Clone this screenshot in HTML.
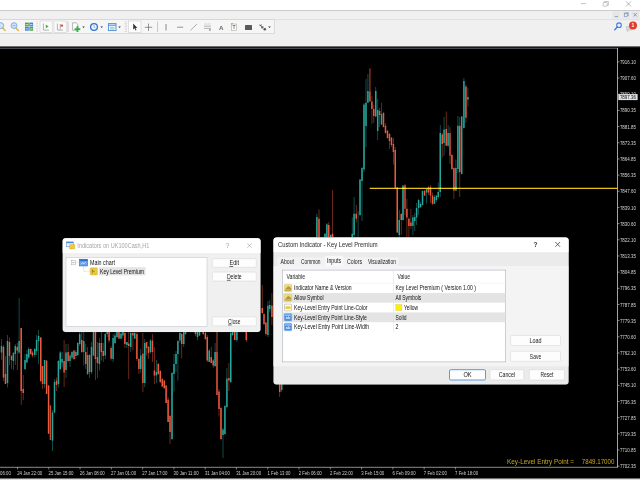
<!DOCTYPE html>
<html><head><meta charset="utf-8"><title>Key Level Premium</title>
<style>
html,body{margin:0;padding:0;background:#000;overflow:hidden}
svg{display:block;filter:blur(0.45px)}
</style></head><body>
<svg width="640" height="480" viewBox="0 0 640 480" style="font-family:'Liberation Sans', sans-serif">
<rect x="0" y="0" width="640" height="10.2" fill="#ffffff" />
<rect x="0" y="10.2" width="640" height="36.5" fill="#f0f0f0" />
<line x1="0" y1="19.6" x2="640" y2="19.6" stroke="#dadada" stroke-width="0.7" />
<rect x="-2" y="19.6" width="276.3" height="13.9" fill="#f6f6f6" stroke="#cfcfcf" stroke-width="0.7" />
<rect x="0" y="46.6" width="640" height="1.6" fill="#161616" />
<rect x="0" y="48" width="640" height="430.2" fill="#000000" />
<rect x="0" y="478.5" width="640" height="1.5" fill="#dcdcdc" />
<line x1="581" y1="3.6" x2="586" y2="3.6" stroke="#9a9a9a" stroke-width="0.6" />
<rect x="603.2" y="2.4" width="4" height="3.8" fill="none" stroke="#9a9a9a" stroke-width="0.55" rx="0.6" />
<path d="M604.4 2.4V1.5h4v3.8h-1.2" fill="none" stroke="#9a9a9a" stroke-width="0.55"/>
<path d="M626 1.4l5 5M631 1.4l-5 5" stroke="#8a8a8a" stroke-width="0.6"/>
<rect x="612.5" y="11.2" width="8" height="7.4" fill="#e6e6e6" />
<rect x="622" y="11.2" width="8" height="7.4" fill="#e6e6e6" />
<rect x="631.2" y="11.2" width="8" height="7.4" fill="#e6e6e6" />
<line x1="614.8" y1="16.6" x2="618" y2="16.6" stroke="#6f8fc4" stroke-width="0.8" />
<rect x="624.3" y="13.6" width="3" height="2.8" fill="none" stroke="#6f8fc4" stroke-width="0.6" />
<path d="M625.3 13.6v-0.9h3v2.8h-1" fill="none" stroke="#6f8fc4" stroke-width="0.6"/>
<path d="M633.6 13l3.2 3.4M636.8 13l-3.2 3.4" stroke="#6f8fc4" stroke-width="0.8"/>
<circle cx="619" cy="25.2" r="2.3" fill="#eaf2ff" stroke="#3f7fe0" stroke-width="1.1"/>
<path d="M617.3 27l-2.6 2.7" stroke="#3f7fe0" stroke-width="1.3" stroke-linecap="round"/>
<path d="M626.5 26.5h5.5v3.6h-3l-1.6 1.4v-1.4h-0.9z" fill="#d8d8d8" stroke="#a8a8a8" stroke-width="0.4"/>
<circle cx="633" cy="25.4" r="4" fill="#e23b2c"/>
<text x="633" y="27.27" font-size="5" fill="#ffffff" text-anchor="middle" font-weight="bold" >1</text>
<circle cx="0.8" cy="25.6" r="2.9" fill="#d3e4fb" stroke="#74a6e8" stroke-width="0.9"/>
<path d="M2.8 28l2.4 2.6" stroke="#d9b23c" stroke-width="1.4" stroke-linecap="round"/>
<circle cx="14" cy="25.6" r="2.9" fill="#d3e4fb" stroke="#74a6e8" stroke-width="0.9"/>
<line x1="12.6" y1="25.6" x2="15.4" y2="25.6" stroke="#74a6e8" stroke-width="0.8" />
<path d="M16 28l2.4 2.6" stroke="#d9b23c" stroke-width="1.4" stroke-linecap="round"/>
<rect x="25" y="22.6" width="3.8" height="3.8" fill="#4fa04a" />
<rect x="29.3" y="22.6" width="3.8" height="3.8" fill="#3f83d6" />
<rect x="25" y="26.9" width="3.8" height="3.8" fill="#3f83d6" />
<rect x="29.3" y="26.9" width="3.8" height="3.8" fill="#4fa04a" />
<line x1="25.6" y1="24.6" x2="28.2" y2="24.6" stroke="#fff" stroke-width="0.7" />
<line x1="29.9" y1="24.6" x2="32.5" y2="24.6" stroke="#fff" stroke-width="0.7" />
<line x1="25.6" y1="28.9" x2="28.2" y2="28.9" stroke="#fff" stroke-width="0.7" />
<line x1="29.9" y1="28.9" x2="32.5" y2="28.9" stroke="#fff" stroke-width="0.7" />
<line x1="37" y1="21.5" x2="37" y2="32" stroke="#b5b5b5" stroke-width="0.7" stroke-dasharray="0.8 0.8"/>
<rect x="40" y="21" width="12.2" height="11.4" fill="#fbfbfb" stroke="#cfcfcf" stroke-width="0.6" />
<rect x="54" y="21" width="12.2" height="11.4" fill="#fbfbfb" stroke="#cfcfcf" stroke-width="0.6" />
<path d="M43.4 23.5v6.6h5.6" fill="none" stroke="#8a8a8a" stroke-width="0.65"/>
<path d="M45.8 24.6l2.8 1.8l-2.8 1.8z" fill="#3fae49"/>
<path d="M57.4 23.5v6.6h5.6" fill="none" stroke="#8a8a8a" stroke-width="0.65"/>
<line x1="60.2" y1="24" x2="60.2" y2="29.6" stroke="#8a8a8a" stroke-width="0.65" />
<path d="M60.6 24.6h2.4v2h-2.4z" fill="#e0483a"/>
<line x1="68" y1="21.5" x2="68" y2="32" stroke="#b5b5b5" stroke-width="0.7" />
<path d="M72.6 22.8h3.6l1.6 1.6v5.8h-5.2z" fill="#fdfdfd" stroke="#8a8a8a" stroke-width="0.6"/>
<path d="M76.5 26.3h1.9v1.9h1.9v1.9h-1.9v1.9h-1.9v-1.9h-1.9v-1.9h1.9z" fill="#2fb344"/>
<path d="M82.3 26.4h2.6l-1.3 1.5z" fill="#333"/>
<circle cx="94" cy="27" r="3.4" fill="#eaf3ff" stroke="#2f74d0" stroke-width="1.3"/>
<path d="M94 25v2.1l1.4 0.8" fill="none" stroke="#7a8aa0" stroke-width="0.6"/>
<path d="M100.4 26.4h2.6l-1.3 1.5z" fill="#333"/>
<rect x="108.4" y="23.6" width="7.6" height="7" fill="#eef5ff" stroke="#4a8ee0" stroke-width="0.9" />
<line x1="108.4" y1="25.2" x2="116" y2="25.2" stroke="#4a8ee0" stroke-width="1.0" />
<line x1="110" y1="27.4" x2="114.4" y2="27.4" stroke="#e08a3a" stroke-width="0.6" />
<line x1="110" y1="29" x2="114.4" y2="29" stroke="#5aa85a" stroke-width="0.6" />
<path d="M118.3 26.4h2.6l-1.3 1.5z" fill="#333"/>
<line x1="125.2" y1="21.5" x2="125.2" y2="32" stroke="#b5b5b5" stroke-width="0.6" stroke-dasharray="0.8 0.8"/>
<line x1="126.4" y1="21.5" x2="126.4" y2="32" stroke="#b5b5b5" stroke-width="0.6" stroke-dasharray="0.8 0.8"/>
<rect x="128.6" y="21" width="12.4" height="11.4" fill="#fdfdfd" stroke="#cfcfcf" stroke-width="0.6" />
<path d="M133.2 23.6v6l1.4-1.3l1 2.2l0.9-0.4l-1-2.1h1.9z" fill="#333"/>
<line x1="148.5" y1="23.6" x2="148.5" y2="31" stroke="#6a6a6a" stroke-width="0.7" />
<line x1="144.8" y1="27.3" x2="152.2" y2="27.3" stroke="#6a6a6a" stroke-width="0.7" />
<line x1="157.5" y1="21.5" x2="157.5" y2="32" stroke="#b5b5b5" stroke-width="0.7" />
<line x1="166" y1="24" x2="166" y2="30.4" stroke="#7a7a7a" stroke-width="0.9" />
<line x1="177" y1="27.2" x2="183.2" y2="27.2" stroke="#7a7a7a" stroke-width="0.8" />
<line x1="190.4" y1="30.4" x2="197" y2="24" stroke="#8a8a8a" stroke-width="0.7" />
<line x1="204" y1="24" x2="211" y2="24" stroke="#999" stroke-width="0.5" stroke-dasharray="0.8 0.5"/>
<line x1="204" y1="26.2" x2="211" y2="26.2" stroke="#888" stroke-width="0.6" />
<line x1="204" y1="28.4" x2="211" y2="28.4" stroke="#888" stroke-width="0.6" />
<path d="M208.8 29.6h2.2l-1.1 1.5z" fill="#555"/>
<text x="221.3" y="29.8" font-size="6.2" fill="#666" text-anchor="middle" font-weight="bold" >A</text>
<rect x="231.6" y="24" width="5" height="6.6" fill="#fbfbf3" stroke="#999" stroke-width="0.5" />
<text x="234.1" y="29.27" font-size="5" fill="#777" text-anchor="middle" font-weight="bold" >T</text>
<line x1="231" y1="23.6" x2="233" y2="23.6" stroke="#888" stroke-width="0.6" />
<rect x="245" y="25" width="7" height="5" fill="#5a5a5a" rx="0.6" />
<path d="M259.6 24.6l2.2 2.2M259.4 25.6h1.8v-1.4" fill="none" stroke="#555" stroke-width="0.7"/>
<rect x="261.2" y="26.2" width="2.2" height="2.2" fill="#666" />
<circle cx="264.8" cy="29.2" r="1.3" fill="#555"/>
<path d="M268.2 26.4h2.6l-1.3 1.5z" fill="#333"/>
<defs><filter id="bl" x="-5%" y="-5%" width="110%" height="110%"><feGaussianBlur stdDeviation="0.3"/></filter></defs>
<g id="candles" filter="url(#bl)">
<rect x="1.10" y="339.0" width="0.8" height="21.00" fill="#25a79c" opacity="0.55"/>
<rect x="0.75" y="346.0" width="1.5" height="6.50" fill="#25a79c"/>
<rect x="3.10" y="345.0" width="0.8" height="36.00" fill="#ec5a3e" opacity="0.55"/>
<rect x="2.75" y="347.0" width="1.5" height="30.50" fill="#ec5a3e"/>
<rect x="5.10" y="356.0" width="0.8" height="28.00" fill="#ec5a3e" opacity="0.55"/>
<rect x="4.75" y="374.0" width="1.5" height="10.00" fill="#ec5a3e"/>
<rect x="7.10" y="335.0" width="0.8" height="52.50" fill="#25a79c" opacity="0.55"/>
<rect x="6.75" y="341.0" width="1.5" height="42.00" fill="#25a79c"/>
<rect x="9.10" y="337.5" width="0.8" height="27.50" fill="#ec5a3e" opacity="0.55"/>
<rect x="8.75" y="342.0" width="1.5" height="14.00" fill="#ec5a3e"/>
<rect x="11.10" y="355.0" width="0.8" height="14.00" fill="#ec5a3e" opacity="0.55"/>
<rect x="10.75" y="356.0" width="1.5" height="4.00" fill="#ec5a3e"/>
<rect x="13.00" y="352.0" width="0.8" height="18.00" fill="#25a79c" opacity="0.55"/>
<rect x="12.65" y="353.0" width="1.5" height="8.00" fill="#25a79c"/>
<rect x="14.90" y="344.0" width="0.8" height="21.00" fill="#25a79c" opacity="0.55"/>
<rect x="14.55" y="346.0" width="1.5" height="8.00" fill="#25a79c"/>
<rect x="16.90" y="343.0" width="0.8" height="27.00" fill="#ec5a3e" opacity="0.55"/>
<rect x="16.55" y="347.0" width="1.5" height="3.60" fill="#ec5a3e"/>
<rect x="18.70" y="298.0" width="0.8" height="56.00" fill="#25a79c" opacity="0.55"/>
<rect x="18.35" y="341.0" width="1.5" height="11.50" fill="#25a79c"/>
<rect x="20.80" y="328.0" width="0.8" height="77.00" fill="#ec5a3e" opacity="0.55"/>
<rect x="20.45" y="328.0" width="1.5" height="63.00" fill="#ec5a3e"/>
<rect x="22.80" y="375.0" width="0.8" height="25.00" fill="#ec5a3e" opacity="0.55"/>
<rect x="22.45" y="389.0" width="1.5" height="4.00" fill="#ec5a3e"/>
<rect x="24.60" y="354.0" width="0.8" height="16.00" fill="#25a79c" opacity="0.55"/>
<rect x="24.25" y="360.0" width="1.5" height="9.00" fill="#25a79c"/>
<rect x="26.50" y="350.0" width="0.8" height="13.00" fill="#25a79c" opacity="0.55"/>
<rect x="26.15" y="354.0" width="1.5" height="8.50" fill="#25a79c"/>
<rect x="28.35" y="347.0" width="0.8" height="12.00" fill="#25a79c" opacity="0.55"/>
<rect x="28.00" y="349.0" width="1.5" height="8.50" fill="#25a79c"/>
<rect x="30.35" y="348.5" width="0.8" height="6.50" fill="#ec5a3e" opacity="0.55"/>
<rect x="30.00" y="349.0" width="1.5" height="5.00" fill="#ec5a3e"/>
<rect x="32.10" y="351.0" width="0.8" height="6.50" fill="#ec5a3e" opacity="0.55"/>
<rect x="31.75" y="352.5" width="1.5" height="3.10" fill="#ec5a3e"/>
<rect x="34.35" y="348.0" width="0.8" height="9.50" fill="#25a79c" opacity="0.55"/>
<rect x="34.00" y="349.0" width="1.5" height="6.00" fill="#25a79c"/>
<rect x="36.20" y="335.0" width="0.8" height="20.00" fill="#25a79c" opacity="0.55"/>
<rect x="35.85" y="340.0" width="1.5" height="11.00" fill="#25a79c"/>
<rect x="38.20" y="330.0" width="0.8" height="34.00" fill="#25a79c" opacity="0.55"/>
<rect x="37.85" y="336.0" width="1.5" height="5.00" fill="#25a79c"/>
<rect x="40.35" y="337.0" width="0.8" height="45.00" fill="#ec5a3e" opacity="0.55"/>
<rect x="40.00" y="337.5" width="1.5" height="43.50" fill="#ec5a3e"/>
<rect x="42.20" y="366.0" width="0.8" height="23.00" fill="#ec5a3e" opacity="0.55"/>
<rect x="41.85" y="366.0" width="1.5" height="18.00" fill="#ec5a3e"/>
<rect x="44.20" y="360.0" width="0.8" height="28.00" fill="#25a79c" opacity="0.55"/>
<rect x="43.85" y="360.0" width="1.5" height="24.00" fill="#25a79c"/>
<rect x="46.20" y="360.0" width="0.8" height="34.00" fill="#ec5a3e" opacity="0.55"/>
<rect x="45.85" y="360.6" width="1.5" height="33.40" fill="#ec5a3e"/>
<rect x="48.20" y="385.0" width="0.8" height="49.00" fill="#ec5a3e" opacity="0.55"/>
<rect x="47.85" y="385.6" width="1.5" height="48.15" fill="#ec5a3e"/>
<rect x="50.00" y="405.0" width="0.8" height="35.00" fill="#ec5a3e" opacity="0.55"/>
<rect x="49.65" y="405.6" width="1.5" height="34.40" fill="#ec5a3e" opacity="0.7"/>
<rect x="52.10" y="410.0" width="0.8" height="41.00" fill="#25a79c" opacity="0.55"/>
<rect x="51.75" y="412.5" width="1.5" height="28.10" fill="#25a79c"/>
<rect x="54.10" y="379.0" width="0.8" height="34.00" fill="#25a79c" opacity="0.55"/>
<rect x="53.75" y="382.0" width="1.5" height="30.50" fill="#25a79c"/>
<rect x="56.10" y="377.5" width="0.8" height="13.50" fill="#ec5a3e" opacity="0.55"/>
<rect x="55.75" y="380.6" width="1.5" height="4.40" fill="#ec5a3e"/>
<rect x="58.00" y="360.0" width="0.8" height="27.50" fill="#25a79c" opacity="0.55"/>
<rect x="57.65" y="361.0" width="1.5" height="23.00" fill="#25a79c"/>
<rect x="59.85" y="351.0" width="0.8" height="19.00" fill="#25a79c" opacity="0.55"/>
<rect x="59.50" y="352.5" width="1.5" height="16.50" fill="#25a79c"/>
<rect x="61.70" y="352.0" width="0.8" height="15.50" fill="#25a79c" opacity="0.55"/>
<rect x="61.35" y="359.0" width="1.5" height="3.50" fill="#25a79c"/>
<rect x="63.70" y="340.0" width="0.8" height="47.00" fill="#ec5a3e" opacity="0.55"/>
<rect x="63.35" y="361.0" width="1.5" height="11.50" fill="#ec5a3e"/>
<rect x="65.60" y="344.0" width="0.8" height="34.00" fill="#25a79c" opacity="0.55"/>
<rect x="65.25" y="352.5" width="1.5" height="17.50" fill="#25a79c"/>
<rect x="67.70" y="344.0" width="0.8" height="18.50" fill="#ec5a3e" opacity="0.55"/>
<rect x="67.35" y="352.0" width="1.5" height="9.00" fill="#ec5a3e"/>
<rect x="69.60" y="354.0" width="0.8" height="13.00" fill="#25a79c" opacity="0.55"/>
<rect x="69.25" y="355.6" width="1.5" height="5.40" fill="#25a79c"/>
<rect x="71.60" y="351.0" width="0.8" height="8.00" fill="#25a79c" opacity="0.55"/>
<rect x="71.25" y="352.0" width="1.5" height="5.50" fill="#25a79c"/>
<rect x="73.60" y="350.0" width="0.8" height="10.00" fill="#ec5a3e" opacity="0.55"/>
<rect x="73.25" y="350.6" width="1.5" height="8.40" fill="#ec5a3e"/>
<rect x="75.50" y="350.0" width="0.8" height="9.00" fill="#25a79c" opacity="0.55"/>
<rect x="75.15" y="352.0" width="1.5" height="4.00" fill="#25a79c"/>
<rect x="77.35" y="342.0" width="0.8" height="14.00" fill="#25a79c" opacity="0.55"/>
<rect x="77.00" y="343.0" width="1.5" height="12.00" fill="#25a79c"/>
<rect x="79.30" y="332.0" width="0.8" height="14.00" fill="#25a79c" opacity="0.55"/>
<rect x="78.95" y="334.0" width="1.5" height="10.00" fill="#25a79c"/>
<rect x="81.35" y="332.0" width="0.8" height="21.00" fill="#ec5a3e" opacity="0.55"/>
<rect x="81.00" y="340.0" width="1.5" height="12.00" fill="#ec5a3e"/>
<rect x="83.35" y="332.0" width="0.8" height="33.50" fill="#25a79c" opacity="0.55"/>
<rect x="83.00" y="341.0" width="1.5" height="11.00" fill="#25a79c"/>
<rect x="85.35" y="344.0" width="0.8" height="25.00" fill="#ec5a3e" opacity="0.55"/>
<rect x="85.00" y="352.0" width="1.5" height="12.00" fill="#ec5a3e"/>
<rect x="87.20" y="347.0" width="0.8" height="28.00" fill="#25a79c" opacity="0.55"/>
<rect x="86.85" y="355.0" width="1.5" height="19.00" fill="#25a79c"/>
<rect x="89.10" y="354.0" width="0.8" height="24.00" fill="#ec5a3e" opacity="0.55"/>
<rect x="88.75" y="355.0" width="1.5" height="17.00" fill="#ec5a3e"/>
<rect x="91.10" y="342.0" width="0.8" height="32.00" fill="#25a79c" opacity="0.55"/>
<rect x="90.75" y="347.0" width="1.5" height="25.00" fill="#25a79c"/>
<rect x="93.10" y="332.0" width="0.8" height="24.00" fill="#25a79c" opacity="0.55"/>
<rect x="92.75" y="332.0" width="1.5" height="23.50" fill="#25a79c"/>
<rect x="95.00" y="332.0" width="0.8" height="48.00" fill="#ec5a3e" opacity="0.55"/>
<rect x="94.65" y="332.0" width="1.5" height="27.00" fill="#ec5a3e"/>
<rect x="97.00" y="342.0" width="0.8" height="36.00" fill="#ec5a3e" opacity="0.55"/>
<rect x="96.65" y="357.0" width="1.5" height="6.00" fill="#ec5a3e"/>
<rect x="99.00" y="338.0" width="0.8" height="32.50" fill="#25a79c" opacity="0.55"/>
<rect x="98.65" y="343.0" width="1.5" height="21.00" fill="#25a79c"/>
<rect x="101.00" y="332.0" width="0.8" height="28.50" fill="#ec5a3e" opacity="0.55"/>
<rect x="100.65" y="343.0" width="1.5" height="9.00" fill="#ec5a3e"/>
<rect x="102.85" y="343.0" width="0.8" height="19.00" fill="#ec5a3e" opacity="0.55"/>
<rect x="102.50" y="351.0" width="1.5" height="5.00" fill="#ec5a3e"/>
<rect x="104.85" y="333.0" width="0.8" height="26.00" fill="#25a79c" opacity="0.55"/>
<rect x="104.50" y="334.0" width="1.5" height="21.50" fill="#25a79c"/>
<rect x="106.85" y="332.0" width="0.8" height="5.00" fill="#25a79c" opacity="0.55"/>
<rect x="106.50" y="332.0" width="1.5" height="2.00" fill="#25a79c"/>
<rect x="108.70" y="332.0" width="0.8" height="11.00" fill="#ec5a3e" opacity="0.55"/>
<rect x="108.35" y="332.0" width="1.5" height="8.50" fill="#ec5a3e"/>
<rect x="110.70" y="346.0" width="0.8" height="14.50" fill="#ec5a3e" opacity="0.55"/>
<rect x="110.35" y="348.0" width="1.5" height="10.60" fill="#ec5a3e"/>
<rect x="112.70" y="334.0" width="0.8" height="28.00" fill="#25a79c" opacity="0.55"/>
<rect x="112.35" y="338.0" width="1.5" height="21.00" fill="#25a79c"/>
<rect x="114.60" y="333.0" width="0.8" height="11.00" fill="#25a79c" opacity="0.55"/>
<rect x="114.25" y="335.5" width="1.5" height="7.50" fill="#25a79c"/>
<rect x="116.60" y="332.0" width="0.8" height="6.00" fill="#25a79c" opacity="0.55"/>
<rect x="116.25" y="332.0" width="1.5" height="5.00" fill="#25a79c"/>
<rect x="118.60" y="332.0" width="0.8" height="7.00" fill="#ec5a3e" opacity="0.55"/>
<rect x="118.25" y="332.0" width="1.5" height="6.60" fill="#ec5a3e"/>
<rect x="120.60" y="332.0" width="0.8" height="7.00" fill="#25a79c" opacity="0.55"/>
<rect x="120.25" y="333.6" width="1.5" height="5.00" fill="#25a79c"/>
<rect x="122.50" y="332.0" width="0.8" height="6.00" fill="#25a79c" opacity="0.55"/>
<rect x="122.15" y="332.0" width="1.5" height="3.50" fill="#25a79c"/>
<rect x="124.50" y="332.0" width="0.8" height="16.00" fill="#ec5a3e" opacity="0.55"/>
<rect x="124.15" y="333.0" width="1.5" height="11.00" fill="#ec5a3e"/>
<rect x="126.50" y="342.0" width="0.8" height="6.00" fill="#25a79c" opacity="0.55"/>
<rect x="126.15" y="342.0" width="1.5" height="3.00" fill="#25a79c"/>
<rect x="128.35" y="332.0" width="0.8" height="47.00" fill="#ec5a3e" opacity="0.55"/>
<rect x="128.00" y="343.6" width="1.5" height="2.40" fill="#ec5a3e"/>
<rect x="130.35" y="332.0" width="0.8" height="20.00" fill="#25a79c" opacity="0.55"/>
<rect x="130.00" y="333.0" width="1.5" height="14.00" fill="#25a79c"/>
<rect x="132.50" y="332.0" width="0.8" height="18.50" fill="#ec5a3e" opacity="0.55"/>
<rect x="132.15" y="333.0" width="1.5" height="2.50" fill="#ec5a3e"/>
<rect x="134.35" y="332.0" width="0.8" height="7.00" fill="#25a79c" opacity="0.55"/>
<rect x="134.00" y="333.0" width="1.5" height="5.60" fill="#25a79c"/>
<rect x="136.50" y="332.0" width="0.8" height="29.00" fill="#ec5a3e" opacity="0.55"/>
<rect x="136.15" y="334.0" width="1.5" height="25.00" fill="#ec5a3e"/>
<rect x="138.50" y="358.0" width="0.8" height="16.00" fill="#ec5a3e" opacity="0.55"/>
<rect x="138.15" y="359.0" width="1.5" height="10.00" fill="#ec5a3e"/>
<rect x="140.35" y="349.0" width="0.8" height="24.00" fill="#25a79c" opacity="0.55"/>
<rect x="140.00" y="355.5" width="1.5" height="13.50" fill="#25a79c"/>
<rect x="142.50" y="333.0" width="0.8" height="59.00" fill="#ec5a3e" opacity="0.55"/>
<rect x="142.15" y="353.6" width="1.5" height="29.40" fill="#ec5a3e"/>
<rect x="144.35" y="339.0" width="0.8" height="48.00" fill="#25a79c" opacity="0.55"/>
<rect x="144.00" y="343.0" width="1.5" height="40.00" fill="#25a79c"/>
<rect x="146.20" y="342.0" width="0.8" height="13.50" fill="#ec5a3e" opacity="0.55"/>
<rect x="145.85" y="342.0" width="1.5" height="6.00" fill="#ec5a3e"/>
<rect x="148.10" y="346.0" width="0.8" height="13.00" fill="#ec5a3e" opacity="0.55"/>
<rect x="147.75" y="347.0" width="1.5" height="6.00" fill="#ec5a3e"/>
<rect x="150.10" y="339.0" width="0.8" height="15.00" fill="#25a79c" opacity="0.55"/>
<rect x="149.75" y="340.5" width="1.5" height="11.50" fill="#25a79c"/>
<rect x="152.10" y="334.0" width="0.8" height="28.00" fill="#ec5a3e" opacity="0.55"/>
<rect x="151.75" y="340.5" width="1.5" height="11.50" fill="#ec5a3e"/>
<rect x="154.00" y="347.0" width="0.8" height="37.00" fill="#ec5a3e" opacity="0.55"/>
<rect x="153.65" y="370.5" width="1.5" height="5.00" fill="#ec5a3e"/>
<rect x="156.00" y="360.0" width="0.8" height="23.00" fill="#25a79c" opacity="0.55"/>
<rect x="155.65" y="372.0" width="1.5" height="3.50" fill="#25a79c"/>
<rect x="157.85" y="363.0" width="0.8" height="12.00" fill="#ec5a3e" opacity="0.55"/>
<rect x="157.50" y="364.0" width="1.5" height="10.00" fill="#ec5a3e"/>
<rect x="159.85" y="370.0" width="0.8" height="13.00" fill="#ec5a3e" opacity="0.55"/>
<rect x="159.50" y="371.0" width="1.5" height="11.00" fill="#ec5a3e"/>
<rect x="161.85" y="378.0" width="0.8" height="9.00" fill="#ec5a3e" opacity="0.55"/>
<rect x="161.50" y="379.0" width="1.5" height="7.50" fill="#ec5a3e"/>
<rect x="163.85" y="380.0" width="0.8" height="9.00" fill="#ec5a3e" opacity="0.55"/>
<rect x="163.50" y="380.5" width="1.5" height="7.50" fill="#ec5a3e"/>
<rect x="165.70" y="385.0" width="0.8" height="18.00" fill="#ec5a3e" opacity="0.55"/>
<rect x="165.35" y="385.5" width="1.5" height="17.50" fill="#ec5a3e"/>
<rect x="167.70" y="397.0" width="0.8" height="25.00" fill="#ec5a3e" opacity="0.55"/>
<rect x="167.35" y="399.6" width="1.5" height="22.40" fill="#ec5a3e"/>
<rect x="169.60" y="415.0" width="0.8" height="29.00" fill="#ec5a3e" opacity="0.55"/>
<rect x="169.25" y="416.0" width="1.5" height="16.00" fill="#ec5a3e"/>
<rect x="171.60" y="372.0" width="0.8" height="68.00" fill="#25a79c" opacity="0.55"/>
<rect x="171.25" y="373.0" width="1.5" height="66.00" fill="#25a79c"/>
<rect x="173.60" y="354.0" width="0.8" height="37.50" fill="#25a79c" opacity="0.55"/>
<rect x="173.25" y="364.0" width="1.5" height="10.00" fill="#25a79c"/>
<rect x="175.60" y="351.0" width="0.8" height="21.00" fill="#25a79c" opacity="0.55"/>
<rect x="175.25" y="354.0" width="1.5" height="10.00" fill="#25a79c"/>
<rect x="177.50" y="340.0" width="0.8" height="40.50" fill="#25a79c" opacity="0.55"/>
<rect x="177.15" y="341.0" width="1.5" height="13.00" fill="#25a79c"/>
<rect x="179.50" y="332.0" width="0.8" height="11.00" fill="#25a79c" opacity="0.55"/>
<rect x="179.15" y="333.0" width="1.5" height="7.50" fill="#25a79c"/>
<rect x="181.35" y="333.0" width="0.8" height="25.60" fill="#ec5a3e" opacity="0.55"/>
<rect x="181.00" y="334.0" width="1.5" height="10.00" fill="#ec5a3e"/>
<rect x="183.35" y="332.0" width="0.8" height="15.00" fill="#25a79c" opacity="0.55"/>
<rect x="183.00" y="332.0" width="1.5" height="12.00" fill="#25a79c"/>
<rect x="185.10" y="332.0" width="0.8" height="3.00" fill="#25a79c" opacity="0.55"/>
<rect x="184.75" y="332.0" width="1.5" height="2.00" fill="#25a79c"/>
<rect x="195.10" y="332.0" width="0.8" height="4.00" fill="#ec5a3e" opacity="0.55"/>
<rect x="194.75" y="332.0" width="1.5" height="2.00" fill="#ec5a3e"/>
<rect x="197.10" y="332.0" width="0.8" height="8.00" fill="#25a79c" opacity="0.55"/>
<rect x="196.75" y="332.0" width="1.5" height="5.00" fill="#25a79c"/>
<rect x="199.10" y="332.0" width="0.8" height="4.00" fill="#25a79c" opacity="0.55"/>
<rect x="198.75" y="332.0" width="1.5" height="3.50" fill="#25a79c"/>
<rect x="202.85" y="332.0" width="0.8" height="3.00" fill="#ec5a3e" opacity="0.55"/>
<rect x="202.50" y="332.0" width="1.5" height="2.00" fill="#ec5a3e"/>
<rect x="205.00" y="332.0" width="0.8" height="8.00" fill="#ec5a3e" opacity="0.55"/>
<rect x="204.65" y="333.0" width="1.5" height="6.00" fill="#ec5a3e"/>
<rect x="206.85" y="335.0" width="0.8" height="27.00" fill="#ec5a3e" opacity="0.55"/>
<rect x="206.50" y="337.0" width="1.5" height="23.50" fill="#ec5a3e"/>
<rect x="208.85" y="349.0" width="0.8" height="13.00" fill="#25a79c" opacity="0.55"/>
<rect x="208.50" y="350.5" width="1.5" height="11.50" fill="#25a79c"/>
<rect x="210.85" y="347.0" width="0.8" height="16.00" fill="#ec5a3e" opacity="0.55"/>
<rect x="210.50" y="357.0" width="1.5" height="6.00" fill="#ec5a3e"/>
<rect x="212.85" y="359.0" width="0.8" height="9.00" fill="#ec5a3e" opacity="0.55"/>
<rect x="212.50" y="360.5" width="1.5" height="5.00" fill="#ec5a3e"/>
<rect x="214.70" y="343.0" width="0.8" height="24.00" fill="#25a79c" opacity="0.55"/>
<rect x="214.35" y="352.0" width="1.5" height="14.00" fill="#25a79c"/>
<rect x="216.25" y="332.0" width="1.5" height="20.00" fill="#ec5a3e" opacity="0.55"/>
<rect x="216.25" y="352.0" width="1.5" height="43.00" fill="#ec5a3e"/>
<rect x="218.60" y="389.0" width="0.8" height="27.50" fill="#ec5a3e" opacity="0.55"/>
<rect x="218.25" y="391.5" width="1.5" height="17.50" fill="#ec5a3e"/>
<rect x="220.60" y="407.0" width="0.8" height="33.00" fill="#ec5a3e" opacity="0.55"/>
<rect x="220.25" y="408.0" width="1.5" height="31.00" fill="#ec5a3e"/>
<rect x="222.60" y="428.0" width="0.8" height="30.00" fill="#25a79c" opacity="0.55"/>
<rect x="222.25" y="429.6" width="1.5" height="5.40" fill="#25a79c"/>
<rect x="224.50" y="405.0" width="0.8" height="30.00" fill="#25a79c" opacity="0.55"/>
<rect x="224.15" y="406.0" width="1.5" height="28.00" fill="#25a79c"/>
<rect x="226.50" y="368.0" width="0.8" height="40.00" fill="#25a79c" opacity="0.55"/>
<rect x="226.15" y="378.6" width="1.5" height="28.40" fill="#25a79c"/>
<rect x="228.50" y="363.0" width="0.8" height="28.00" fill="#ec5a3e" opacity="0.55"/>
<rect x="228.15" y="378.0" width="1.5" height="2.50" fill="#ec5a3e"/>
<rect x="230.35" y="332.0" width="0.8" height="51.00" fill="#25a79c" opacity="0.55"/>
<rect x="230.00" y="333.0" width="1.5" height="49.00" fill="#25a79c"/>
<rect x="232.20" y="332.0" width="0.8" height="4.00" fill="#25a79c" opacity="0.55"/>
<rect x="231.85" y="332.0" width="1.5" height="3.00" fill="#25a79c"/>
<rect x="234.35" y="332.0" width="0.8" height="8.00" fill="#ec5a3e" opacity="0.55"/>
<rect x="234.00" y="332.0" width="1.5" height="8.00" fill="#ec5a3e"/>
<rect x="236.50" y="332.0" width="0.8" height="10.00" fill="#25a79c" opacity="0.55"/>
<rect x="236.15" y="332.0" width="1.5" height="8.00" fill="#25a79c"/>
<rect x="245.90" y="332.0" width="0.8" height="10.00" fill="#ec5a3e" opacity="0.55"/>
<rect x="245.55" y="332.0" width="1.5" height="8.00" fill="#ec5a3e"/>
<rect x="261.85" y="285.0" width="0.8" height="29.00" fill="#ec5a3e" opacity="0.55"/>
<rect x="261.50" y="308.0" width="1.5" height="5.00" fill="#ec5a3e"/>
<rect x="263.60" y="313.0" width="0.8" height="12.00" fill="#ec5a3e" opacity="0.55"/>
<rect x="263.25" y="314.0" width="1.5" height="10.00" fill="#ec5a3e"/>
<rect x="265.50" y="322.0" width="0.8" height="13.60" fill="#ec5a3e" opacity="0.55"/>
<rect x="265.15" y="322.5" width="1.5" height="11.50" fill="#ec5a3e"/>
<rect x="267.50" y="301.0" width="0.8" height="36.00" fill="#25a79c" opacity="0.55"/>
<rect x="267.15" y="305.6" width="1.5" height="29.40" fill="#25a79c"/>
<rect x="269.35" y="300.0" width="0.8" height="12.50" fill="#25a79c" opacity="0.55"/>
<rect x="269.00" y="305.0" width="1.5" height="4.00" fill="#25a79c"/>
<rect x="271.50" y="293.0" width="0.8" height="32.00" fill="#ec5a3e" opacity="0.55"/>
<rect x="271.15" y="305.6" width="1.5" height="11.40" fill="#ec5a3e"/>
<rect x="279.30" y="384.0" width="0.8" height="13.00" fill="#ec5a3e" opacity="0.55"/>
<rect x="278.95" y="384.0" width="1.5" height="8.00" fill="#ec5a3e"/>
<rect x="281.30" y="384.0" width="0.8" height="8.00" fill="#25a79c" opacity="0.55"/>
<rect x="280.95" y="384.0" width="1.5" height="6.00" fill="#25a79c"/>
<rect x="316.50" y="213.75" width="0.8" height="23.25" fill="#25a79c" opacity="0.55"/>
<rect x="316.15" y="217.0" width="1.5" height="20.00" fill="#25a79c"/>
<rect x="318.60" y="209.4" width="0.8" height="27.60" fill="#ec5a3e" opacity="0.55"/>
<rect x="318.25" y="218.75" width="1.5" height="18.25" fill="#ec5a3e"/>
<rect x="324.60" y="233.0" width="0.8" height="4.00" fill="#25a79c" opacity="0.55"/>
<rect x="324.25" y="233.75" width="1.5" height="3.25" fill="#25a79c"/>
<rect x="326.50" y="223.0" width="0.8" height="14.00" fill="#25a79c" opacity="0.55"/>
<rect x="326.15" y="224.4" width="1.5" height="12.60" fill="#25a79c"/>
<rect x="328.35" y="222.0" width="0.8" height="15.00" fill="#ec5a3e" opacity="0.55"/>
<rect x="328.00" y="225.0" width="1.5" height="12.00" fill="#ec5a3e"/>
<rect x="330.35" y="234.0" width="0.8" height="3.00" fill="#25a79c" opacity="0.55"/>
<rect x="330.00" y="235.0" width="1.5" height="2.00" fill="#25a79c"/>
<rect x="332.20" y="190.0" width="0.8" height="47.00" fill="#ec5a3e" opacity="0.55"/>
<rect x="331.85" y="233.75" width="1.5" height="3.25" fill="#ec5a3e"/>
<rect x="351.85" y="217.5" width="0.8" height="19.50" fill="#25a79c" opacity="0.55"/>
<rect x="351.50" y="233.75" width="1.5" height="3.25" fill="#25a79c"/>
<rect x="353.70" y="197.0" width="0.8" height="40.00" fill="#25a79c" opacity="0.55"/>
<rect x="353.35" y="213.75" width="1.5" height="21.25" fill="#25a79c"/>
<rect x="355.85" y="205.0" width="0.8" height="17.50" fill="#ec5a3e" opacity="0.55"/>
<rect x="355.50" y="213.75" width="1.5" height="5.00" fill="#ec5a3e"/>
<rect x="357.70" y="211.0" width="0.8" height="26.00" fill="#25a79c" opacity="0.55"/>
<rect x="359.60" y="179.0" width="0.8" height="37.00" fill="#25a79c" opacity="0.55"/>
<rect x="359.25" y="179.5" width="1.5" height="35.50" fill="#25a79c"/>
<rect x="361.60" y="167.0" width="0.8" height="54.00" fill="#25a79c" opacity="0.55"/>
<rect x="361.25" y="168.0" width="1.5" height="13.00" fill="#25a79c"/>
<rect x="363.60" y="103.0" width="0.8" height="69.00" fill="#25a79c" opacity="0.55"/>
<rect x="363.25" y="104.6" width="1.5" height="64.90" fill="#25a79c"/>
<rect x="365.60" y="79.0" width="0.8" height="68.00" fill="#25a79c" opacity="0.55"/>
<rect x="365.25" y="102.75" width="1.5" height="23.25" fill="#25a79c"/>
<rect x="367.50" y="74.0" width="0.8" height="29.00" fill="#25a79c" opacity="0.55"/>
<rect x="367.15" y="91.0" width="1.5" height="11.75" fill="#25a79c"/>
<rect x="369.15" y="68.4" width="1.5" height="23.10" fill="#ec5a3e" opacity="0.55"/>
<rect x="369.15" y="91.5" width="1.5" height="10.00" fill="#ec5a3e"/>
<rect x="371.50" y="96.0" width="0.8" height="28.00" fill="#ec5a3e" opacity="0.55"/>
<rect x="371.15" y="101.5" width="1.5" height="7.50" fill="#ec5a3e"/>
<rect x="373.35" y="105.0" width="0.8" height="18.00" fill="#ec5a3e" opacity="0.55"/>
<rect x="373.00" y="109.0" width="1.5" height="7.00" fill="#ec5a3e"/>
<rect x="375.35" y="87.0" width="0.8" height="30.00" fill="#25a79c" opacity="0.55"/>
<rect x="375.00" y="91.0" width="1.5" height="25.50" fill="#25a79c"/>
<rect x="377.30" y="99.0" width="0.8" height="41.00" fill="#25a79c" opacity="0.55"/>
<rect x="376.95" y="110.0" width="1.5" height="21.00" fill="#25a79c"/>
<rect x="379.20" y="108.0" width="0.8" height="19.00" fill="#ec5a3e" opacity="0.55"/>
<rect x="378.85" y="111.0" width="1.5" height="4.00" fill="#ec5a3e"/>
<rect x="381.10" y="102.75" width="0.8" height="22.25" fill="#25a79c" opacity="0.55"/>
<rect x="380.75" y="114.0" width="1.5" height="10.50" fill="#25a79c"/>
<rect x="383.10" y="112.0" width="0.8" height="15.50" fill="#ec5a3e" opacity="0.55"/>
<rect x="382.75" y="113.0" width="1.5" height="14.00" fill="#ec5a3e"/>
<rect x="385.10" y="123.0" width="0.8" height="10.50" fill="#ec5a3e" opacity="0.55"/>
<rect x="384.75" y="125.75" width="1.5" height="7.25" fill="#ec5a3e"/>
<rect x="387.10" y="130.0" width="0.8" height="8.50" fill="#ec5a3e" opacity="0.55"/>
<rect x="386.75" y="130.75" width="1.5" height="7.25" fill="#ec5a3e"/>
<rect x="389.10" y="133.0" width="0.8" height="16.00" fill="#ec5a3e" opacity="0.55"/>
<rect x="388.75" y="134.0" width="1.5" height="7.00" fill="#ec5a3e"/>
<rect x="391.10" y="137.0" width="0.8" height="10.00" fill="#ec5a3e" opacity="0.55"/>
<rect x="390.75" y="137.6" width="1.5" height="7.40" fill="#ec5a3e"/>
<rect x="393.00" y="138.0" width="0.8" height="26.50" fill="#ec5a3e" opacity="0.55"/>
<rect x="392.65" y="144.0" width="1.5" height="8.00" fill="#ec5a3e"/>
<rect x="394.85" y="147.0" width="0.8" height="42.00" fill="#ec5a3e" opacity="0.55"/>
<rect x="394.50" y="150.0" width="1.5" height="38.75" fill="#ec5a3e"/>
<rect x="396.85" y="187.0" width="0.8" height="46.00" fill="#ec5a3e" opacity="0.55"/>
<rect x="396.50" y="188.0" width="1.5" height="44.50" fill="#ec5a3e"/>
<rect x="398.85" y="210.0" width="0.8" height="27.00" fill="#25a79c" opacity="0.55"/>
<rect x="398.50" y="220.0" width="1.5" height="15.00" fill="#25a79c"/>
<rect x="400.85" y="213.0" width="0.8" height="22.00" fill="#ec5a3e" opacity="0.55"/>
<rect x="400.50" y="214.0" width="1.5" height="6.00" fill="#ec5a3e"/>
<rect x="402.60" y="185.0" width="0.8" height="35.50" fill="#25a79c" opacity="0.55"/>
<rect x="402.25" y="185.6" width="1.5" height="34.40" fill="#25a79c"/>
<rect x="404.60" y="184.0" width="0.8" height="31.00" fill="#ec5a3e" opacity="0.55"/>
<rect x="404.25" y="185.0" width="1.5" height="23.75" fill="#ec5a3e" opacity="0.8"/>
<rect x="406.50" y="198.75" width="0.8" height="38.25" fill="#ec5a3e" opacity="0.55"/>
<rect x="406.15" y="208.75" width="1.5" height="8.75" fill="#ec5a3e"/>
<rect x="408.50" y="217.5" width="0.8" height="19.50" fill="#ec5a3e" opacity="0.55"/>
<rect x="408.15" y="218.75" width="1.5" height="7.25" fill="#ec5a3e"/>
<rect x="410.50" y="208.75" width="0.8" height="20.00" fill="#ec5a3e" opacity="0.55"/>
<rect x="410.15" y="222.5" width="1.5" height="3.50" fill="#ec5a3e"/>
<rect x="412.50" y="215.0" width="0.8" height="20.00" fill="#25a79c" opacity="0.55"/>
<rect x="412.15" y="217.5" width="1.5" height="8.50" fill="#25a79c"/>
<rect x="414.35" y="213.0" width="0.8" height="18.00" fill="#25a79c" opacity="0.55"/>
<rect x="414.00" y="217.0" width="1.5" height="4.00" fill="#25a79c"/>
<rect x="416.20" y="203.0" width="0.8" height="22.00" fill="#25a79c" opacity="0.55"/>
<rect x="415.85" y="208.0" width="1.5" height="9.50" fill="#25a79c"/>
<rect x="418.20" y="199.0" width="0.8" height="16.00" fill="#25a79c" opacity="0.55"/>
<rect x="417.85" y="200.0" width="1.5" height="8.00" fill="#25a79c"/>
<rect x="420.20" y="202.0" width="0.8" height="6.00" fill="#25a79c" opacity="0.55"/>
<rect x="419.85" y="204.0" width="1.5" height="3.00" fill="#25a79c"/>
<rect x="422.10" y="190.5" width="0.8" height="15.00" fill="#25a79c" opacity="0.55"/>
<rect x="421.75" y="191.0" width="1.5" height="14.00" fill="#25a79c"/>
<rect x="424.20" y="190.0" width="0.8" height="6.00" fill="#ec5a3e" opacity="0.55"/>
<rect x="423.85" y="191.0" width="1.5" height="4.60" fill="#ec5a3e"/>
<rect x="426.20" y="188.0" width="0.8" height="15.75" fill="#25a79c" opacity="0.55"/>
<rect x="425.85" y="188.75" width="1.5" height="3.75" fill="#25a79c"/>
<rect x="428.10" y="186.0" width="0.8" height="9.00" fill="#ec5a3e" opacity="0.55"/>
<rect x="427.75" y="188.0" width="1.5" height="4.50" fill="#ec5a3e"/>
<rect x="430.10" y="185.0" width="0.8" height="18.00" fill="#ec5a3e" opacity="0.55"/>
<rect x="429.75" y="188.75" width="1.5" height="6.85" fill="#ec5a3e"/>
<rect x="432.10" y="192.5" width="0.8" height="12.50" fill="#ec5a3e" opacity="0.55"/>
<rect x="431.75" y="195.6" width="1.5" height="8.15" fill="#ec5a3e"/>
<rect x="434.00" y="195.0" width="0.8" height="9.00" fill="#25a79c" opacity="0.55"/>
<rect x="433.65" y="197.0" width="1.5" height="6.75" fill="#25a79c"/>
<rect x="436.00" y="195.0" width="0.8" height="7.00" fill="#25a79c" opacity="0.55"/>
<rect x="435.65" y="195.6" width="1.5" height="4.40" fill="#25a79c"/>
<rect x="437.85" y="182.5" width="0.8" height="16.25" fill="#25a79c" opacity="0.55"/>
<rect x="437.50" y="192.0" width="1.5" height="5.00" fill="#25a79c"/>
<rect x="439.85" y="125.0" width="0.8" height="72.00" fill="#25a79c" opacity="0.55"/>
<rect x="439.50" y="133.0" width="1.5" height="59.00" fill="#25a79c"/>
<rect x="441.85" y="133.0" width="0.8" height="24.60" fill="#ec5a3e" opacity="0.55"/>
<rect x="441.50" y="134.5" width="1.5" height="9.50" fill="#ec5a3e"/>
<rect x="443.70" y="117.0" width="0.8" height="38.75" fill="#25a79c" opacity="0.55"/>
<rect x="443.35" y="129.5" width="1.5" height="13.50" fill="#25a79c"/>
<rect x="445.85" y="111.5" width="0.8" height="34.50" fill="#ec5a3e" opacity="0.55"/>
<rect x="445.50" y="129.0" width="1.5" height="16.75" fill="#ec5a3e"/>
<rect x="447.70" y="125.0" width="0.8" height="22.00" fill="#25a79c" opacity="0.55"/>
<rect x="447.35" y="133.0" width="1.5" height="12.75" fill="#25a79c"/>
<rect x="449.60" y="127.0" width="0.8" height="37.00" fill="#ec5a3e" opacity="0.55"/>
<rect x="449.25" y="133.0" width="1.5" height="22.75" fill="#ec5a3e" opacity="0.85"/>
<rect x="451.50" y="154.0" width="0.8" height="16.00" fill="#ec5a3e" opacity="0.55"/>
<rect x="451.15" y="155.0" width="1.5" height="14.00" fill="#ec5a3e"/>
<rect x="453.50" y="167.0" width="0.8" height="32.00" fill="#ec5a3e" opacity="0.55"/>
<rect x="453.15" y="168.0" width="1.5" height="22.60" fill="#ec5a3e"/>
<rect x="455.50" y="159.5" width="0.8" height="31.50" fill="#25a79c" opacity="0.55"/>
<rect x="455.15" y="168.0" width="1.5" height="22.60" fill="#25a79c"/>
<rect x="457.50" y="116.0" width="0.8" height="57.00" fill="#25a79c" opacity="0.55"/>
<rect x="457.15" y="125.75" width="1.5" height="43.25" fill="#25a79c"/>
<rect x="459.35" y="117.0" width="0.8" height="80.00" fill="#ec5a3e" opacity="0.55"/>
<rect x="459.00" y="125.75" width="1.5" height="46.25" fill="#ec5a3e"/>
<rect x="461.30" y="116.0" width="0.8" height="58.50" fill="#25a79c" opacity="0.55"/>
<rect x="460.95" y="116.5" width="1.5" height="57.50" fill="#25a79c"/>
<rect x="463.50" y="78.0" width="0.8" height="50.50" fill="#25a79c" opacity="0.55"/>
<rect x="463.15" y="81.0" width="1.5" height="47.00" fill="#25a79c"/>
<rect x="465.50" y="84.6" width="0.8" height="38.15" fill="#ec5a3e" opacity="0.55"/>
<rect x="465.15" y="86.5" width="1.5" height="31.25" fill="#ec5a3e"/>
<rect x="467.50" y="87.75" width="0.8" height="18.75" fill="#25a79c" opacity="0.55"/>
<rect x="467.15" y="97.0" width="1.5" height="2.60" fill="#25a79c"/>
</g>
<line x1="369.7" y1="188.35" x2="617.5" y2="188.35" stroke="#e6c41c" stroke-width="1.35" />
<rect x="396.4" y="187.7" width="1.6" height="1.3" fill="#fff22a" />
<rect x="402.4" y="187.7" width="1.6" height="1.3" fill="#fff22a" />
<rect x="404.2" y="187.7" width="1.6" height="1.3" fill="#fff22a" />
<rect x="427.7" y="187.7" width="1.6" height="1.3" fill="#fff22a" />
<rect x="429.7" y="187.7" width="1.6" height="1.3" fill="#fff22a" />
<rect x="439.4" y="187.7" width="1.6" height="1.3" fill="#fff22a" />
<rect x="453.2" y="187.7" width="1.6" height="1.3" fill="#fff22a" />
<rect x="455.2" y="187.7" width="1.6" height="1.3" fill="#fff22a" />
<line x1="0" y1="48.4" x2="617.5" y2="48.4" stroke="#6c7680" stroke-width="0.7" />
<line x1="617.5" y1="48" x2="617.5" y2="467.6" stroke="#c8ced4" stroke-width="0.8" />
<line x1="0" y1="467.3" x2="617.5" y2="467.3" stroke="#aab1b8" stroke-width="0.8" />
<line x1="617.5" y1="61.9" x2="619.6" y2="61.9" stroke="#c8ced4" stroke-width="0.6" />
<text x="619.9" y="63.96" font-size="5.8" fill="#d6d6d6" textLength="16.1" lengthAdjust="spacingAndGlyphs" >7916.10</text>
<line x1="617.5" y1="78.072" x2="619.6" y2="78.072" stroke="#c8ced4" stroke-width="0.6" />
<text x="619.9" y="80.13" font-size="5.8" fill="#d6d6d6" textLength="16.1" lengthAdjust="spacingAndGlyphs" >7907.60</text>
<line x1="617.5" y1="94.244" x2="619.6" y2="94.244" stroke="#c8ced4" stroke-width="0.6" />
<text x="619.9" y="96.3" font-size="5.8" fill="#d6d6d6" textLength="16.1" lengthAdjust="spacingAndGlyphs" >7899.10</text>
<line x1="617.5" y1="110.416" x2="619.6" y2="110.416" stroke="#c8ced4" stroke-width="0.6" />
<text x="619.9" y="112.47" font-size="5.8" fill="#d6d6d6" textLength="16.1" lengthAdjust="spacingAndGlyphs" >7890.35</text>
<line x1="617.5" y1="126.588" x2="619.6" y2="126.588" stroke="#c8ced4" stroke-width="0.6" />
<text x="619.9" y="128.65" font-size="5.8" fill="#d6d6d6" textLength="16.1" lengthAdjust="spacingAndGlyphs" >7881.85</text>
<line x1="617.5" y1="142.76" x2="619.6" y2="142.76" stroke="#c8ced4" stroke-width="0.6" />
<text x="619.9" y="144.82" font-size="5.8" fill="#d6d6d6" textLength="16.1" lengthAdjust="spacingAndGlyphs" >7873.35</text>
<line x1="617.5" y1="158.93200000000002" x2="619.6" y2="158.93200000000002" stroke="#c8ced4" stroke-width="0.6" />
<text x="619.9" y="160.99" font-size="5.8" fill="#d6d6d6" textLength="16.1" lengthAdjust="spacingAndGlyphs" >7864.85</text>
<line x1="617.5" y1="175.104" x2="619.6" y2="175.104" stroke="#c8ced4" stroke-width="0.6" />
<text x="619.9" y="177.16" font-size="5.8" fill="#d6d6d6" textLength="16.1" lengthAdjust="spacingAndGlyphs" >7856.35</text>
<line x1="617.5" y1="191.276" x2="619.6" y2="191.276" stroke="#c8ced4" stroke-width="0.6" />
<text x="619.9" y="193.34" font-size="5.8" fill="#d6d6d6" textLength="16.1" lengthAdjust="spacingAndGlyphs" >7847.60</text>
<line x1="617.5" y1="207.448" x2="619.6" y2="207.448" stroke="#c8ced4" stroke-width="0.6" />
<text x="619.9" y="209.51" font-size="5.8" fill="#d6d6d6" textLength="16.1" lengthAdjust="spacingAndGlyphs" >7839.10</text>
<line x1="617.5" y1="223.62" x2="619.6" y2="223.62" stroke="#c8ced4" stroke-width="0.6" />
<text x="619.9" y="225.68" font-size="5.8" fill="#d6d6d6" textLength="16.1" lengthAdjust="spacingAndGlyphs" >7830.60</text>
<line x1="617.5" y1="239.792" x2="619.6" y2="239.792" stroke="#c8ced4" stroke-width="0.6" />
<text x="619.9" y="241.85" font-size="5.8" fill="#d6d6d6" textLength="16.1" lengthAdjust="spacingAndGlyphs" >7822.10</text>
<line x1="617.5" y1="255.96400000000003" x2="619.6" y2="255.96400000000003" stroke="#c8ced4" stroke-width="0.6" />
<text x="619.9" y="258.02" font-size="5.8" fill="#d6d6d6" textLength="16.1" lengthAdjust="spacingAndGlyphs" >7813.35</text>
<line x1="617.5" y1="272.136" x2="619.6" y2="272.136" stroke="#c8ced4" stroke-width="0.6" />
<text x="619.9" y="274.2" font-size="5.8" fill="#d6d6d6" textLength="16.1" lengthAdjust="spacingAndGlyphs" >7804.85</text>
<line x1="617.5" y1="288.308" x2="619.6" y2="288.308" stroke="#c8ced4" stroke-width="0.6" />
<text x="619.9" y="290.37" font-size="5.8" fill="#d6d6d6" textLength="16.1" lengthAdjust="spacingAndGlyphs" >7796.35</text>
<line x1="617.5" y1="304.48" x2="619.6" y2="304.48" stroke="#c8ced4" stroke-width="0.6" />
<text x="619.9" y="306.54" font-size="5.8" fill="#d6d6d6" textLength="16.1" lengthAdjust="spacingAndGlyphs" >7787.85</text>
<line x1="617.5" y1="320.652" x2="619.6" y2="320.652" stroke="#c8ced4" stroke-width="0.6" />
<text x="619.9" y="322.71" font-size="5.8" fill="#d6d6d6" textLength="16.1" lengthAdjust="spacingAndGlyphs" >7779.35</text>
<line x1="617.5" y1="336.824" x2="619.6" y2="336.824" stroke="#c8ced4" stroke-width="0.6" />
<text x="619.9" y="338.88" font-size="5.8" fill="#d6d6d6" textLength="16.1" lengthAdjust="spacingAndGlyphs" >7770.60</text>
<line x1="617.5" y1="352.996" x2="619.6" y2="352.996" stroke="#c8ced4" stroke-width="0.6" />
<text x="619.9" y="355.06" font-size="5.8" fill="#d6d6d6" textLength="16.1" lengthAdjust="spacingAndGlyphs" >7762.10</text>
<line x1="617.5" y1="369.168" x2="619.6" y2="369.168" stroke="#c8ced4" stroke-width="0.6" />
<text x="619.9" y="371.23" font-size="5.8" fill="#d6d6d6" textLength="16.1" lengthAdjust="spacingAndGlyphs" >7753.60</text>
<line x1="617.5" y1="385.34" x2="619.6" y2="385.34" stroke="#c8ced4" stroke-width="0.6" />
<text x="619.9" y="387.4" font-size="5.8" fill="#d6d6d6" textLength="16.1" lengthAdjust="spacingAndGlyphs" >7745.10</text>
<line x1="617.5" y1="401.512" x2="619.6" y2="401.512" stroke="#c8ced4" stroke-width="0.6" />
<text x="619.9" y="403.57" font-size="5.8" fill="#d6d6d6" textLength="16.1" lengthAdjust="spacingAndGlyphs" >7736.35</text>
<line x1="617.5" y1="417.68399999999997" x2="619.6" y2="417.68399999999997" stroke="#c8ced4" stroke-width="0.6" />
<text x="619.9" y="419.74" font-size="5.8" fill="#d6d6d6" textLength="16.1" lengthAdjust="spacingAndGlyphs" >7727.85</text>
<line x1="617.5" y1="433.856" x2="619.6" y2="433.856" stroke="#c8ced4" stroke-width="0.6" />
<text x="619.9" y="435.92" font-size="5.8" fill="#d6d6d6" textLength="16.1" lengthAdjust="spacingAndGlyphs" >7719.35</text>
<line x1="617.5" y1="450.028" x2="619.6" y2="450.028" stroke="#c8ced4" stroke-width="0.6" />
<text x="619.9" y="452.09" font-size="5.8" fill="#d6d6d6" textLength="16.1" lengthAdjust="spacingAndGlyphs" >7710.85</text>
<line x1="617.5" y1="466.2" x2="619.6" y2="466.2" stroke="#c8ced4" stroke-width="0.6" />
<text x="619.9" y="468.26" font-size="5.8" fill="#d6d6d6" textLength="16.1" lengthAdjust="spacingAndGlyphs" >7702.35</text>
<rect x="618.3" y="94.1" width="19.3" height="6.0" fill="#dfe3e6" />
<text x="619.9" y="99.06" font-size="5.8" fill="#111" textLength="16.1" lengthAdjust="spacingAndGlyphs" >7897.36</text>
<line x1="-13.78" y1="467.3" x2="-13.78" y2="469.4" stroke="#c8ced4" stroke-width="0.6" />
<text x="-14.08" y="474.92" font-size="5.7" fill="#cfcfcf" textLength="25" lengthAdjust="spacingAndGlyphs" >24 Jan 06:00</text>
<line x1="17.5" y1="467.3" x2="17.5" y2="469.4" stroke="#c8ced4" stroke-width="0.6" />
<text x="17.2" y="474.92" font-size="5.7" fill="#cfcfcf" textLength="25" lengthAdjust="spacingAndGlyphs" >24 Jan 22:00</text>
<line x1="48.78" y1="467.3" x2="48.78" y2="469.4" stroke="#c8ced4" stroke-width="0.6" />
<text x="48.480000000000004" y="474.92" font-size="5.7" fill="#cfcfcf" textLength="25" lengthAdjust="spacingAndGlyphs" >25 Jan 15:00</text>
<line x1="80.06" y1="467.3" x2="80.06" y2="469.4" stroke="#c8ced4" stroke-width="0.6" />
<text x="79.76" y="474.92" font-size="5.7" fill="#cfcfcf" textLength="25" lengthAdjust="spacingAndGlyphs" >26 Jan 08:00</text>
<line x1="111.34" y1="467.3" x2="111.34" y2="469.4" stroke="#c8ced4" stroke-width="0.6" />
<text x="111.04" y="474.92" font-size="5.7" fill="#cfcfcf" textLength="25" lengthAdjust="spacingAndGlyphs" >27 Jan 01:00</text>
<line x1="142.62" y1="467.3" x2="142.62" y2="469.4" stroke="#c8ced4" stroke-width="0.6" />
<text x="142.32" y="474.92" font-size="5.7" fill="#cfcfcf" textLength="25" lengthAdjust="spacingAndGlyphs" >27 Jan 17:00</text>
<line x1="173.9" y1="467.3" x2="173.9" y2="469.4" stroke="#c8ced4" stroke-width="0.6" />
<text x="173.6" y="474.92" font-size="5.7" fill="#cfcfcf" textLength="25" lengthAdjust="spacingAndGlyphs" >30 Jan 11:00</text>
<line x1="205.18" y1="467.3" x2="205.18" y2="469.4" stroke="#c8ced4" stroke-width="0.6" />
<text x="204.88" y="474.92" font-size="5.7" fill="#cfcfcf" textLength="25" lengthAdjust="spacingAndGlyphs" >31 Jan 04:00</text>
<line x1="236.46" y1="467.3" x2="236.46" y2="469.4" stroke="#c8ced4" stroke-width="0.6" />
<text x="236.16" y="474.92" font-size="5.7" fill="#cfcfcf" textLength="25" lengthAdjust="spacingAndGlyphs" >31 Jan 20:00</text>
<line x1="267.74" y1="467.3" x2="267.74" y2="469.4" stroke="#c8ced4" stroke-width="0.6" />
<text x="267.44" y="474.92" font-size="5.7" fill="#cfcfcf" textLength="23" lengthAdjust="spacingAndGlyphs" >1 Feb 13:00</text>
<line x1="299.02" y1="467.3" x2="299.02" y2="469.4" stroke="#c8ced4" stroke-width="0.6" />
<text x="298.71999999999997" y="474.92" font-size="5.7" fill="#cfcfcf" textLength="23" lengthAdjust="spacingAndGlyphs" >2 Feb 06:00</text>
<line x1="330.3" y1="467.3" x2="330.3" y2="469.4" stroke="#c8ced4" stroke-width="0.6" />
<text x="330.0" y="474.92" font-size="5.7" fill="#cfcfcf" textLength="23" lengthAdjust="spacingAndGlyphs" >2 Feb 22:00</text>
<line x1="361.58" y1="467.3" x2="361.58" y2="469.4" stroke="#c8ced4" stroke-width="0.6" />
<text x="361.28" y="474.92" font-size="5.7" fill="#cfcfcf" textLength="23" lengthAdjust="spacingAndGlyphs" >3 Feb 15:00</text>
<line x1="392.86" y1="467.3" x2="392.86" y2="469.4" stroke="#c8ced4" stroke-width="0.6" />
<text x="392.56" y="474.92" font-size="5.7" fill="#cfcfcf" textLength="23" lengthAdjust="spacingAndGlyphs" >6 Feb 09:00</text>
<line x1="424.14" y1="467.3" x2="424.14" y2="469.4" stroke="#c8ced4" stroke-width="0.6" />
<text x="423.84" y="474.92" font-size="5.7" fill="#cfcfcf" textLength="23" lengthAdjust="spacingAndGlyphs" >7 Feb 02:00</text>
<line x1="455.42" y1="467.3" x2="455.42" y2="469.4" stroke="#c8ced4" stroke-width="0.6" />
<text x="455.12" y="474.92" font-size="5.7" fill="#cfcfcf" textLength="23" lengthAdjust="spacingAndGlyphs" >7 Feb 18:00</text>
<text x="507" y="464.3" font-size="7.6" fill="#c9a81c" textLength="67" lengthAdjust="spacingAndGlyphs" >Key-Level Entry Point =</text>
<text x="581.8" y="464.3" font-size="7.6" fill="#c9a81c" textLength="32.6" lengthAdjust="spacingAndGlyphs" >7849.17000</text>
<rect x="62.35" y="237.95000000000002" width="198.5" height="94.4" fill="#6a6a6a" rx="3.3" opacity="0.45"/>
<rect x="62.7" y="238.3" width="197.8" height="93.7" fill="#f0f0f0" rx="3" />
<path d="M62.7 253.10000000000002V241.3a3 3 0 0 1 3 -3H257.5a3 3 0 0 1 3 3V253.10000000000002z" fill="#ffffff"/>
<rect x="66.4" y="241.9" width="6.8" height="4.8" fill="#f4f8ff" stroke="#5a94e2" stroke-width="0.6" />
<rect x="66.4" y="241.9" width="6.8" height="1.3" fill="#4a88dc" />
<rect x="69.4" y="244.4" width="5.4" height="4.6" fill="#ecc940" stroke="#c9a838" stroke-width="0.4" rx="0.6" />
<text x="77.3" y="248.21" font-size="6.8" fill="#a6a6a6" textLength="72" lengthAdjust="spacingAndGlyphs" >Indicators on UK100Cash,H1</text>
<text x="227.6" y="248.11" font-size="6.5" fill="#9a9a9a" text-anchor="middle" >?</text>
<path d="M247.3 243.4l4.4 4.4M251.7 243.4l-4.4 4.4" stroke="#a0a0a0" stroke-width="0.6"/>
<rect x="66" y="257.4" width="141" height="68.9" fill="#ffffff" stroke="#c3cad3" stroke-width="0.6" />
<rect x="71.3" y="260.6" width="4.2" height="4.2" fill="#fff" stroke="#a8a8a8" stroke-width="0.5" />
<line x1="72.3" y1="262.7" x2="74.5" y2="262.7" stroke="#666" stroke-width="0.5" />
<line x1="75.2" y1="262.6" x2="79.4" y2="262.6" stroke="#aaa" stroke-width="0.5" stroke-dasharray="0.6 0.6"/>
<rect x="79.6" y="259.3" width="7.8" height="6.6" fill="#6aa2ea" stroke="#3576d2" stroke-width="0.7" />
<rect x="79.6" y="259.3" width="7.8" height="1.9" fill="#2f6fd0" />
<path d="M81 264.3l1.6-1.6l1.4 1l1.8-1.8" fill="none" stroke="#ffffff" stroke-width="0.7"/>
<text x="90" y="264.91" font-size="6.5" fill="#111" textLength="25" lengthAdjust="spacingAndGlyphs" >Main chart</text>
<path d="M83.5 266v5.4h6" fill="none" stroke="#aaa" stroke-width="0.5" stroke-dasharray="0.6 0.6"/>
<rect x="90.2" y="267.8" width="7.2" height="7.2" fill="#ecc83f" stroke="#c9a32c" stroke-width="0.4" rx="0.8" />
<path d="M92.4 269.4v3.8M92.4 271.2h2.2M95.4 273.6l0.1 0.1" stroke="#8a6a10" stroke-width="0.7" fill="none"/>
<rect x="99" y="267.2" width="46.6" height="8.2" fill="#e4e4e4" />
<text x="100" y="273.61" font-size="6.5" fill="#111" textLength="44" lengthAdjust="spacingAndGlyphs" >Key Level Premium</text>
<rect x="212.3" y="258.7" width="44" height="8.6" fill="#fdfdfd" stroke="#d2d2d2" stroke-width="0.5" rx="1.3" />
<text x="234.3" y="265.27" font-size="6.4" fill="#1a1a1a" text-anchor="middle" textLength="9.6" lengthAdjust="spacingAndGlyphs"><tspan text-decoration="underline">E</tspan>dit</text>
<rect x="212.3" y="272.1" width="44" height="9" fill="#fdfdfd" stroke="#d2d2d2" stroke-width="0.5" rx="1.3" />
<text x="234.3" y="278.87" font-size="6.4" fill="#1a1a1a" text-anchor="middle" textLength="14.8" lengthAdjust="spacingAndGlyphs"><tspan text-decoration="underline">D</tspan>elete</text>
<rect x="212.3" y="316.8" width="44" height="9.1" fill="#fdfdfd" stroke="#d2d2d2" stroke-width="0.5" rx="1.3" />
<text x="234.3" y="323.62" font-size="6.4" fill="#1a1a1a" text-anchor="middle" textLength="12.4" lengthAdjust="spacingAndGlyphs"><tspan text-decoration="underline">C</tspan>lose</text>
<rect x="273.15" y="237.15" width="295.8" height="147.6" fill="#6a6a6a" rx="3.3" opacity="0.45"/>
<rect x="273.5" y="237.5" width="295.1" height="146.9" fill="#ebebeb" rx="3" />
<path d="M273.5 252.3V240.5a3 3 0 0 1 3 -3H565.6a3 3 0 0 1 3 3V252.3z" fill="#ffffff"/>
<text x="278" y="247.29" font-size="7" fill="#2a2a2a" textLength="99.5" lengthAdjust="spacingAndGlyphs" >Custom Indicator - Key Level Premium</text>
<text x="535.6" y="246.94" font-size="6.6" fill="#333" text-anchor="middle" font-weight="bold" >?</text>
<path d="M555.3 242l4.8 4.8M560.1 242l-4.8 4.8" stroke="#333" stroke-width="0.75"/>
<rect x="273.7" y="252.5" width="294.6" height="113.8" fill="#ebebeb" />
<rect x="277.6" y="257.3" width="121" height="9" fill="#f2f2f2" />
<rect x="273.7" y="266" width="294.6" height="100.2" fill="#f4f4f4" />
<rect x="325" y="255.8" width="18.2" height="10.6" fill="#f8f8f8" />
<text x="280.5" y="263.91" font-size="6.5" fill="#222" textLength="13.5" lengthAdjust="spacingAndGlyphs" >About</text>
<text x="301" y="263.91" font-size="6.5" fill="#222" textLength="19.5" lengthAdjust="spacingAndGlyphs" >Common</text>
<text x="327" y="263.11" font-size="6.5" fill="#111" textLength="14" lengthAdjust="spacingAndGlyphs" >Inputs</text>
<text x="347" y="263.91" font-size="6.5" fill="#222" textLength="15" lengthAdjust="spacingAndGlyphs" >Colors</text>
<text x="368" y="263.91" font-size="6.5" fill="#222" textLength="28" lengthAdjust="spacingAndGlyphs" >Visualization</text>
<rect x="282.4" y="270.1" width="223.3" height="91.8" fill="#ffffff" stroke="#a9b1bb" stroke-width="0.6" />
<rect x="282.8" y="292.95" width="222.5" height="9.75" fill="#e4e4e4" />
<rect x="282.8" y="312.45" width="222.5" height="9.75" fill="#e4e4e4" />
<line x1="282.8" y1="283.2" x2="505.3" y2="283.2" stroke="#ececec" stroke-width="0.5" />
<line x1="393.5" y1="270.4" x2="393.5" y2="332" stroke="#e2e2e2" stroke-width="0.6" />
<text x="286.5" y="279.31" font-size="6.5" fill="#222" textLength="18.5" lengthAdjust="spacingAndGlyphs" >Variable</text>
<text x="397.5" y="279.31" font-size="6.5" fill="#222" textLength="12.5" lengthAdjust="spacingAndGlyphs" >Value</text>
<rect x="284.2" y="284.3" width="7.6" height="7.4" fill="#ead98a" stroke="#d9c469" stroke-width="0.4" rx="1" />
<path d="M285.0 289.5l2-2.2l1.2-1.4l1.4 1.2l1.6 1l0.2 1.6z" fill="#b39a3c"/>
<rect x="284.8" y="289.5" width="6.4" height="1.6" fill="#c9b052" />
<text x="294" y="290.31" font-size="6.5" fill="#111" textLength="57.7" lengthAdjust="spacingAndGlyphs" >Indicator Name &amp; Version</text>
<text x="395.5" y="290.31" font-size="6.5" fill="#111" textLength="80.5" lengthAdjust="spacingAndGlyphs" >Key Level Premium ( Version 1.00 )</text>
<rect x="284.2" y="294.05" width="7.6" height="7.4" fill="#ead98a" stroke="#d9c469" stroke-width="0.4" rx="1" />
<path d="M285.0 299.25l2-2.2l1.2-1.4l1.4 1.2l1.6 1l0.2 1.6z" fill="#b39a3c"/>
<rect x="284.8" y="299.25" width="6.4" height="1.6" fill="#c9b052" />
<text x="294" y="300.06" font-size="6.5" fill="#111" textLength="29.5" lengthAdjust="spacingAndGlyphs" >Allow Symbol</text>
<text x="395.5" y="300.06" font-size="6.5" fill="#111" textLength="25.7" lengthAdjust="spacingAndGlyphs" >All Symbols</text>
<rect x="284.5" y="304.1" width="7" height="6.8" fill="#fbfbf6" stroke="#9a9a9a" stroke-width="0.5" rx="0.6" />
<rect x="285.4" y="306.40000000000003" width="5.2" height="2.4" fill="#f4c71c" />
<text x="294" y="309.81" font-size="6.5" fill="#111" textLength="73.5" lengthAdjust="spacingAndGlyphs" >Key-Level Entry Point Line-Color</text>
<rect x="395.8" y="304.4" width="6.2" height="6.2" fill="#ffee00" stroke="#c9c9a0" stroke-width="0.4" />
<text x="404" y="309.81" font-size="6.5" fill="#111" textLength="14" lengthAdjust="spacingAndGlyphs" >Yellow</text>
<rect x="284.2" y="313.55" width="7.6" height="7.4" fill="#4e8fdc" stroke="#7fb0ea" stroke-width="0.5" rx="1" />
<rect x="285.0" y="314.35" width="6" height="1.6" fill="#8dbaf0" />
<text x="288.0" y="319.15" font-size="3.8" fill="#eaf3ff" text-anchor="middle" font-weight="bold">ab</text>
<text x="294" y="319.56" font-size="6.5" fill="#111" textLength="72.7" lengthAdjust="spacingAndGlyphs" >Key-Level Entry Point Line-Style</text>
<text x="395.5" y="319.56" font-size="6.5" fill="#111" textLength="11" lengthAdjust="spacingAndGlyphs" >Solid</text>
<rect x="284.2" y="323.3" width="7.6" height="7.4" fill="#4e8fdc" stroke="#7fb0ea" stroke-width="0.5" rx="1" />
<rect x="285.0" y="324.1" width="6" height="1.6" fill="#8dbaf0" />
<text x="288.0" y="328.9" font-size="3.8" fill="#eaf3ff" text-anchor="middle" font-weight="bold">ab</text>
<text x="294" y="329.31" font-size="6.5" fill="#111" textLength="75.2" lengthAdjust="spacingAndGlyphs" >Key-Level Entry Point Line-Width</text>
<text x="395.5" y="329.31" font-size="6.5" fill="#111" textLength="3" lengthAdjust="spacingAndGlyphs" >2</text>
<rect x="510.5" y="335.5" width="50" height="10" fill="#fdfdfd" stroke="#d2d2d2" stroke-width="0.5" rx="1.3" />
<text x="535.5" y="342.81" font-size="6.5" fill="#1a1a1a" text-anchor="middle" textLength="12" lengthAdjust="spacingAndGlyphs">Load</text>
<rect x="510.5" y="351.3" width="50" height="10" fill="#fdfdfd" stroke="#d2d2d2" stroke-width="0.5" rx="1.3" />
<text x="535.5" y="358.61" font-size="6.5" fill="#1a1a1a" text-anchor="middle" textLength="11.3" lengthAdjust="spacingAndGlyphs">Save</text>
<rect x="449.5" y="369.7" width="36" height="10.3" fill="#fdfdfd" stroke="#4a90dc" stroke-width="0.9" rx="1.3" />
<text x="467.5" y="377.16" font-size="6.5" fill="#1a1a1a" text-anchor="middle" textLength="8.2" lengthAdjust="spacingAndGlyphs">OK</text>
<rect x="490" y="369.7" width="33.8" height="10.3" fill="#fdfdfd" stroke="#d2d2d2" stroke-width="0.5" rx="1.3" />
<text x="506.9" y="377.16" font-size="6.5" fill="#1a1a1a" text-anchor="middle" textLength="16.2" lengthAdjust="spacingAndGlyphs">Cancel</text>
<rect x="529.3" y="369.7" width="35.2" height="10.3" fill="#fdfdfd" stroke="#d2d2d2" stroke-width="0.5" rx="1.3" />
<text x="546.9" y="377.16" font-size="6.5" fill="#1a1a1a" text-anchor="middle" textLength="13" lengthAdjust="spacingAndGlyphs">Reset</text>
</svg>
</body></html>
